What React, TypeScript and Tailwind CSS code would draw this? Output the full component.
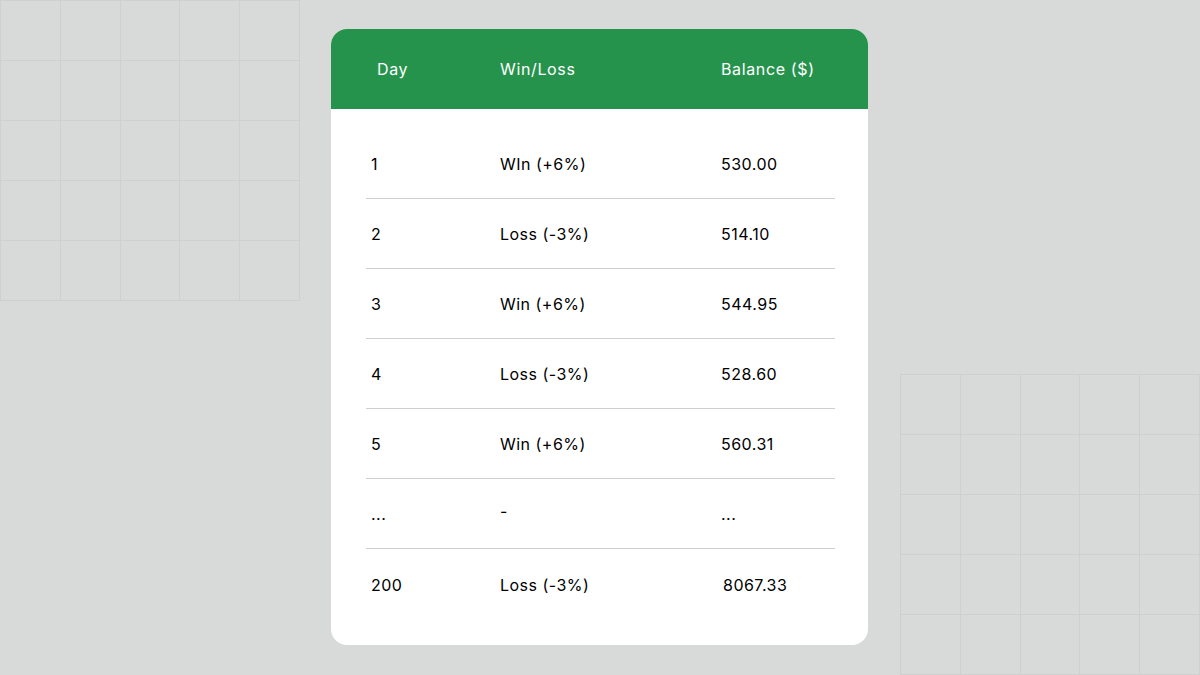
import React from 'react';

const rows = [
  { day: '1', result: 'WIn (+6%)', balance: '530.00' },
  { day: '2', result: 'Loss (-3%)', balance: '514.10' },
  { day: '3', result: 'Win (+6%)', balance: '544.95' },
  { day: '4', result: 'Loss (-3%)', balance: '528.60' },
  { day: '5', result: 'Win (+6%)', balance: '560.31' },
  { day: '...', result: '-', balance: '...' },
  { day: '200', result: 'Loss (-3%)', balance: '8067.33', last: true },
];

const GridDecor: React.FC<{ className?: string }> = ({ className }) => (
  <div className={`grid w-[300px] grid-cols-5 border-l border-t border-[#cdd0cf] ${className ?? ''}`}>
    {Array.from({ length: 25 }).map((_, i) => (
      <div key={i} className="h-[60px] border-b border-r border-[#cdd0cf]" />
    ))}
  </div>
);

const App: React.FC = () => {
  return (
    <div
      className="flex h-[675px] w-[1200px] overflow-hidden bg-[#d8dad9]"
      style={{ fontFamily: 'Inter, "Noto Sans", sans-serif' }}
    >
      <GridDecor className="self-start" />

      <div className="ml-[31px] mt-[29px] flex h-[616px] w-[537px] flex-col overflow-hidden rounded-[16px] bg-white">
        <div className="flex h-[80px] items-center bg-[#26934c] text-[16px] tracking-[0.04em] text-white">
          <div className="w-[169px] pl-[46px]">Day</div>
          <div className="w-[221px]">Win/Loss</div>
          <div>Balance ($)</div>
        </div>

        <div className="mx-[33px] ml-[35px] pt-[20px]">
          {rows.map((row) => (
            <div
              key={row.day}
              className={`flex h-[70px] items-center pt-[1px] text-[16px] tracking-[0.03em] text-black ${
                row.last ? '' : 'border-b border-[#cfcfcf]'
              }`}
            >
              <div className="w-[134px] pl-[5px]">{row.day}</div>
              <div className={`w-[221px] ${row.result === '-' ? '-mt-[6px]' : ''}`}>{row.result}</div>
              <div className={row.last ? 'pl-[2px]' : ''}>{row.balance}</div>
            </div>
          ))}
        </div>
      </div>

      <GridDecor className="ml-[32px] self-end" />
    </div>
  );
};

export default App;
